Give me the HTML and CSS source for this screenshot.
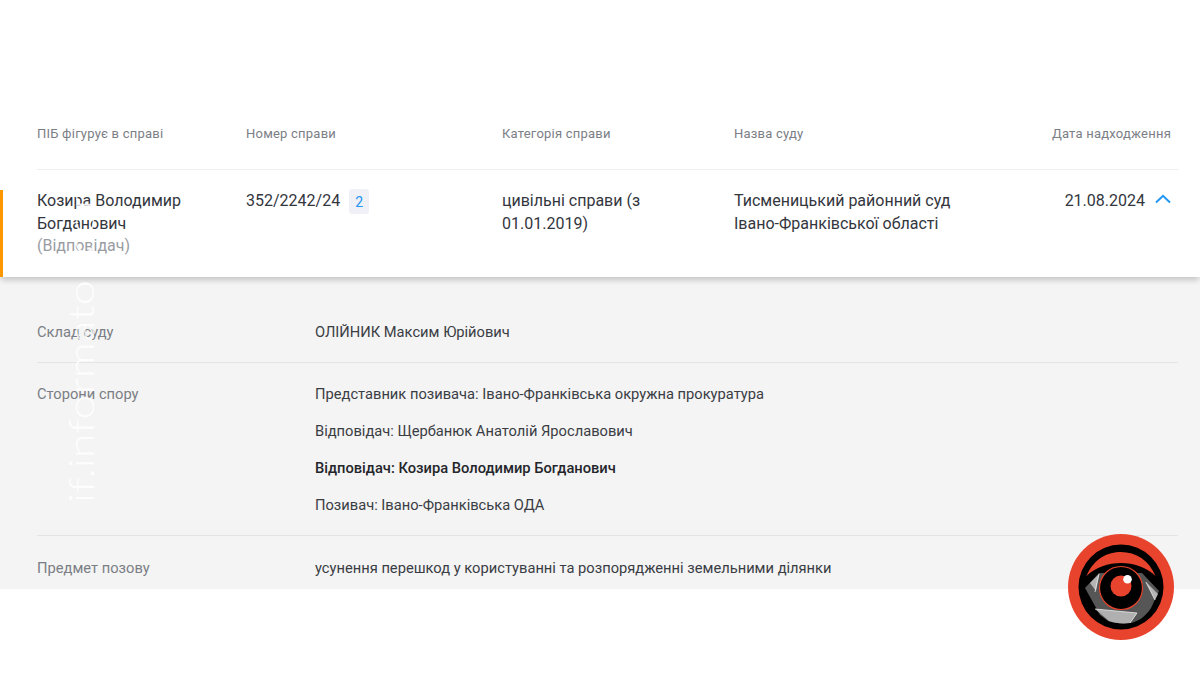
FILE: index.html
```html
<!DOCTYPE html>
<html lang="uk">
<head>
<meta charset="utf-8">
<title>Судова справа</title>
<link rel="stylesheet" href="styles.css">
</head>
<body>
<main class="page">
  <div class="head-wrap">
    <div class="cols head">
      <div>ПІБ фігурує в справі</div>
      <div>Номер справи</div>
      <div>Категорія справи</div>
      <div>Назва суду</div>
      <div class="right">Дата надходження</div>
    </div>
  </div>
  <section class="row">
    <div class="cols body">
      <div class="name">Козира Володимир Богданович<br><span class="role">(Відповідач)</span></div>
      <div class="num"><span>352/2242/24</span><span class="badge">2</span></div>
      <div class="cat">цивільні справи (з 01.01.2019)</div>
      <div class="court">Тисменицький районний суд Івано-Франківської області</div>
      <div class="date"><span>21.08.2024</span>
        <svg class="chev" width="16" height="10" viewBox="0 0 16 10"><path d="M1 8.500 L8 1.800 L15 8.500" fill="none" stroke="#2196f3" stroke-width="2"/></svg>
      </div>
    </div>
  </section>
  <section class="panel">
    <div class="detail first">
      <div class="label">Склад суду</div>
      <div class="vals"><p>ОЛІЙНИК Максим Юрійович</p></div>
    </div>
    <div class="detail middle">
      <div class="label">Сторони спору</div>
      <div class="vals">
        <p>Представник позивача: Івано-Франківська окружна прокуратура</p>
        <p>Відповідач: Щербанюк Анатолій Ярославович</p>
        <p class="strong">Відповідач: Козира Володимир Богданович</p>
        <p>Позивач: Івано-Франківська ОДА</p>
      </div>
    </div>
    <div class="detail last">
      <div class="label">Предмет позову</div>
      <div class="vals"><p>усунення перешкод у користуванні та розпорядженні земельними ділянки</p></div>
    </div>
  </section>
</main>
<div class="mark">if.informator.com</div>
<svg class="logo" width="106" height="106" viewBox="0 0 106 106">
  <circle cx="53" cy="53" r="53" fill="#e8432c"/>
  <circle cx="53" cy="53" r="42.500" fill="#000"/>
  <path d="M18.500 42 C26 24 40 18 53 18 C68 18 81 26 87.500 42 C78 33 66 29 53 29 C40 29 28 33 18.500 42 Z" fill="#e8432c"/>
  <path d="M17 54 L31 39 L74 39 L91 57 L83 74 C78 82 70 88 62 89 C54 90 46 89 40 87 L32 81 Z" fill="#565656"/>
  <path d="M22 49 L31 40 L28 57 Z" fill="#b5b5b5"/>
  <path d="M78 48 L90 60 L87 66 Z" fill="#b5b5b5"/>
  <path d="M27 75 L69 79 L62 89 C54 90 46 89 41 87 Z" fill="#b0b0b0"/>
  <path d="M27 75 L69 79 M69 79 L62 89 M78 48 L87 66 M31 40 L27 58" stroke="#eee" stroke-width="0.800" fill="none"/>
  <circle cx="53" cy="54" r="21.500" fill="#000" stroke="#e8432c" stroke-width="1.200"/>
  <circle cx="53" cy="52" r="10.500" fill="#e8432c"/>
  <circle cx="59.500" cy="45.300" r="4.300" fill="#fff"/>
</svg>
</body>
</html>
```
FILE: styles.css
```css
* { box-sizing: border-box; }
html, body { margin: 0; padding: 0; background: #fff; }
body {
  width: 1200px;
  height: 675px;
  overflow: hidden;
  position: relative;
  font-family: Roboto, "Liberation Sans", sans-serif;
  color: #33363d;
}
.page { display: flex; flex-direction: column; }
.head-wrap { padding: 126px 22px 0 37px; }
.cols {
  display: grid;
  grid-template-columns: 209px 256px 232px 1fr 170px;
}
.head {
  font-size: 13px;
  line-height: 16px;
  color: #7b7e85;
  letter-spacing: 0.22px;
  height: 44px;
  padding-right: 7px;
  border-bottom: 1px solid #eeeef3;
}
.right { text-align: right; }
.row {
  height: 107px;
  background: #fff;
  padding: 19px 29px 0 37px;
  box-shadow: 0 4px 6px -1px rgba(0, 0, 0, 0.2);
  position: relative;
}
.row::before {
  content: "";
  position: absolute;
  left: 0;
  top: 20px;
  bottom: 0;
  width: 3px;
  background: #ff9800;
}
.body {
  font-size: 16px;
  line-height: 23px;
}
.name { max-width: 190px; }
.cat { max-width: 170px; }
.court { max-width: 230px; }
.role { color: #9a9ca3; line-height: 21px; display: block; }
.num { display: flex; align-items: flex-start; gap: 9px; }
.badge {
  width: 20px;
  height: 25px;
  background: #eff1f6;
  color: #2196f3;
  border-radius: 3px;
  font-size: 14px;
  text-align: center;
  line-height: 27px;
}
.date { display: flex; justify-content: flex-end; align-items: flex-start; gap: 10px; justify-self: end; }
.chev { margin-top: 5px; }
.panel {
  background: #f4f4f4;
  height: 312px;
  overflow: hidden;
  padding: 0 22px 0 37px;
  font-size: 14.700px;
  line-height: 20px;
}
.detail {
  display: grid;
  grid-template-columns: 278px 1fr;
  border-bottom: 1px solid #e4e4e4;
  padding: 21px 0;
}
.detail.first { padding: 45px 0 20px; }
.detail.middle { padding-bottom: 20px; }
.detail.last { border-bottom: 0; padding-top: 22px; }
.label { color: #7b7e85; }
.vals p { margin: 0 0 17px; color: #3a3d44; }
.vals p:last-child { margin-bottom: 0; }
.vals .strong { font-weight: 500; color: #24262b; }
.mark {
  position: absolute;
  left: 80px;
  top: 503px;
  transform-origin: 0 50%;
  transform: translateY(-50%) rotate(-90deg) scaleX(1.25);
  font-family: Lato, sans-serif;
  font-weight: 300;
  font-size: 36px;
  line-height: 1;
  color: rgba(255, 255, 255, 0.92);
  white-space: nowrap;
}
.logo { position: absolute; left: 1068px; top: 534px; }
```
